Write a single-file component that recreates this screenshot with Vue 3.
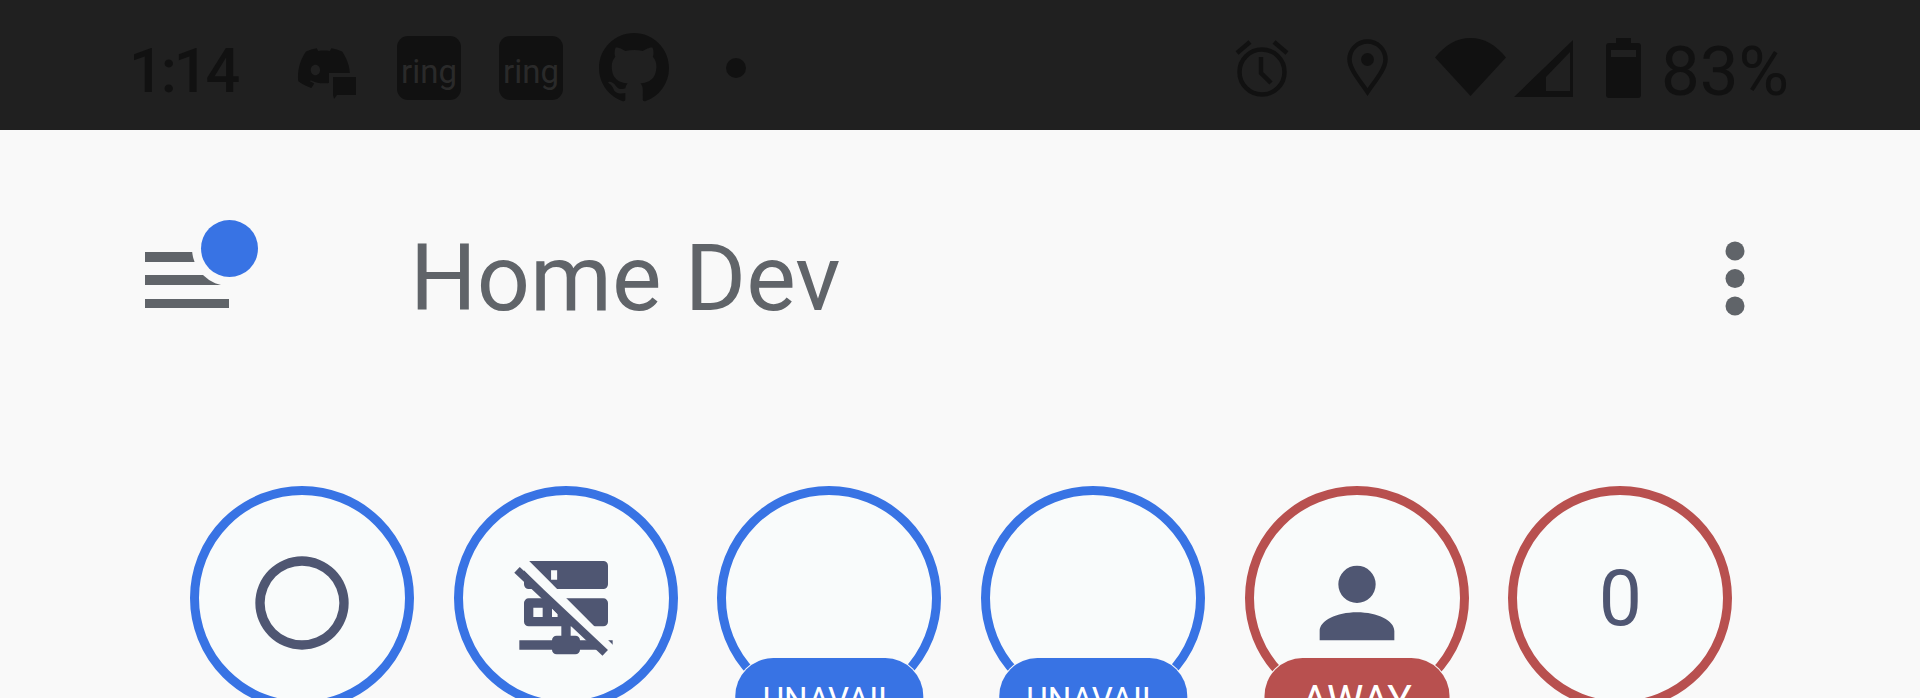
<script setup>
const entities = [
  { id: 'a', color: 'blue', icon: 'circle' },
  { id: 'b', color: 'blue', icon: 'server' },
  { id: 'c', color: 'blue', badge: 'UNAVAIL' },
  { id: 'd', color: 'blue', badge: 'UNAVAIL' },
  { id: 'e', color: 'red', icon: 'person', badge: 'AWAY', short: true },
  { id: 'f', color: 'red', value: '0' },
]
</script>

<template>
  <div class="page">
    <header class="status">
      <span class="time">1:14</span>
      <svg class="discord" viewBox="0 0 61 51" width="61" height="51">
        <path fill="#111" transform="translate(2 -6) scale(2.17)" d="M20.317 4.3698a19.7913 19.7913 0 00-4.8851-1.5152.0741.0741 0 00-.0785.0371c-.211.3753-.4447.8648-.6083 1.2495-1.8447-.2762-3.68-.2762-5.4868 0-.1636-.3933-.4058-.8742-.6177-1.2495a.077.077 0 00-.0785-.037 19.7363 19.7363 0 00-4.8852 1.515.0699.0699 0 00-.0321.0277C.5334 9.0458-.319 13.5799.0992 18.0578a.0824.0824 0 00.0312.0561c2.0528 1.5076 4.0413 2.4228 5.9929 3.0294a.0777.0777 0 00.0842-.0276c.4616-.6304.8731-1.2952 1.226-1.9942a.076.076 0 00-.0416-.1057c-.6528-.2476-1.2743-.5495-1.8722-.8923a.077.077 0 01-.0076-.1277c.1258-.0943.2517-.1923.3718-.2914a.0743.0743 0 01.0776-.0105c3.9278 1.7933 8.18 1.7933 12.0614 0a.0739.0739 0 01.0785.0095c.1202.099.246.1981.3728.2924a.077.077 0 01-.0066.1276 12.2986 12.2986 0 01-1.873.8914.0766.0766 0 00-.0407.1067c.3604.698.7719 1.3628 1.225 1.9932a.076.076 0 00.0842.0286c1.961-.6067 3.9495-1.5219 6.0023-3.0294a.077.077 0 00.0313-.0552c.5004-5.177-.8382-9.6739-3.5485-13.6604a.061.061 0 00-.0312-.0286zM8.02 15.3312c-1.1825 0-2.1569-1.0857-2.1569-2.419 0-1.3332.9555-2.4189 2.157-2.4189 1.2108 0 2.1757 1.0952 2.1568 2.419 0 1.3332-.9555 2.4189-2.1569 2.4189z" />
        <path fill="#202020" d="M33 25h28v26H33z" />
        <path fill="#111" d="M37 29h23v18H41l-3 4-1-4z" />
      </svg>
      <span class="ring first">ring</span>
      <span class="ring second">ring</span>
      <svg class="github" viewBox="0 0 16 16" width="70" height="70">
        <path fill="#111" d="M8 0C3.58 0 0 3.58 0 8c0 3.54 2.29 6.53 5.47 7.59.4.07.55-.17.55-.38 0-.19-.01-.82-.01-1.49-2.01.37-2.53-.49-2.69-.94-.09-.23-.48-.94-.82-1.13-.28-.15-.68-.52-.01-.53.63-.01 1.08.58 1.23.82.72 1.21 1.87.87 2.33.66.07-.52.28-.87.51-1.07-1.78-.2-3.64-.89-3.64-3.95 0-.87.31-1.59.82-2.15-.08-.2-.36-1.02.08-2.12 0 0 .67-.21 2.2.82.64-.18 1.32-.27 2-.27.68 0 1.36.09 2 .27 1.53-1.04 2.2-.82 2.2-.82.44 1.1.16 1.92.08 2.12.51.56.82 1.27.82 2.15 0 3.07-1.87 3.75-3.65 3.95.29.25.54.73.54 1.48 0 1.07-.01 1.93-.01 2.2 0 .21.15.46.55.38A8.013 8.013 0 0016 8c0-4.42-3.58-8-8-8z" />
      </svg>
      <span class="notif-dot"></span>
      <span class="spacer"></span>
      <svg class="alarm" viewBox="0 0 54 58" width="54" height="58">
        <g fill="none" stroke="#111" stroke-width="4.5">
          <circle cx="27" cy="33" r="22.5" />
          <path d="M15 3 2 14M39 3l13 11M26 18v16l10 10" />
        </g>
      </svg>
      <svg class="pin" viewBox="0 0 41 57" width="41" height="57">
        <path fill="none" stroke="#111" stroke-width="4.5" d="M20.5 53C13 42 2.5 30 2.5 20.5a18 18 0 0 1 36 0C38.500 30 28 42 20.500 53z" />
        <circle cx="20.500" cy="20.500" r="6.500" fill="#111" />
      </svg>
      <svg class="wifi" viewBox="0 0 71 58" width="71" height="58">
        <path fill="#111" d="M0 19.500C10 7 22 0 35.500 0S61 7 71 19.500L35.500 58z" />
      </svg>
      <svg class="signal" viewBox="0 0 59 57" width="59" height="57">
        <path fill="#111" fill-rule="evenodd" d="M59 0v57H0zM56 12V51H32V37z" />
      </svg>
      <svg class="battery" viewBox="0 0 35 60" width="35" height="60">
        <path fill="#111" fill-rule="evenodd" d="M10 0h15v5h7a3 3 0 0 1 3 3v49a3 3 0 0 1-3 3H3a3 3 0 0 1-3-3V8a3 3 0 0 1 3-3h7zM5 12v7h25v-7z" />
      </svg>
      <span class="percent">83%</span>
    </header>

    <div class="toolbar">
      <div class="menu">
        <span class="bar"></span>
        <span class="bar"></span>
        <span class="bar"></span>
        <span class="menu-dot"></span>
      </div>
      <h1 class="title">Home Dev</h1>
      <svg class="more" viewBox="0 0 20 75" width="20" height="75">
        <circle cx="10" cy="10" r="9.500" />
        <circle cx="10" cy="37.500" r="9.500" />
        <circle cx="10" cy="65" r="9.500" />
      </svg>
    </div>

    <section class="badges">
      <div v-for="e in entities" :key="e.id" class="entity" :class="e.color">
        <svg v-if="e.icon === 'circle'" class="icon" viewBox="0 0 24 24">
          <path d="M12 20a8 8 0 1 1 0-16 8 8 0 0 1 0 16zM12 2a10 10 0 1 0 0 20 10 10 0 0 0 0-20z" />
        </svg>
        <svg v-else-if="e.icon === 'server'" class="icon" viewBox="0 0 24 24">
          <path fill-rule="evenodd" d="M4 3h16a1 1 0 0 1 1 1v4a1 1 0 0 1-1 1H4a1 1 0 0 1-1-1V4a1 1 0 0 1 1-1zM8.800 5v2h1.300V5zM4 11h16a1 1 0 0 1 1 1v4a1 1 0 0 1-1 1H13v2h1a1 1 0 0 1 1 1h7v2h-7a1 1 0 0 1-1 1h-4a1 1 0 0 1-1-1H2v-2h7a1 1 0 0 1 1-1h1v-2H4a1 1 0 0 1-1-1v-4a1 1 0 0 1 1-1zM5 13v2h2v-2zM9 13.200V15h1.200v-.6z" />
          <path class="cut" d="M2 2.460l20 20" />
          <path class="slash" d="M1.500 4.900 20.400 22.700" />
        </svg>
        <svg v-else-if="e.icon === 'person'" class="icon" viewBox="0 0 24 24">
          <path d="M12 4a4 4 0 1 1 0 8 4 4 0 0 1 0-8zM12 14c4.420 0 8 1.790 8 4v2H4v-2c0-2.210 3.580-4 8-4z" />
        </svg>
        <span v-else-if="e.value" class="value">{{ e.value }}</span>
        <span v-if="e.badge" class="badge" :class="{ short: e.short }">{{ e.badge }}</span>
      </div>
    </section>
  </div>
</template>

<style>
html, body { margin: 0; overflow: hidden; }
</style>

<style scoped>
.page {
  width: 1920px;
  height: 698px;
  overflow: hidden;
  background: #f9f9f9;
  font-family: Roboto, "Liberation Sans", sans-serif;
  color: #606469;
}
.status {
  height: 130px;
  box-sizing: border-box;
  background: #202020;
  color: #111;
  display: flex;
  align-items: center;
  padding: 0 131px 0 129px;
}
.time {
  font-size: 61px;
  font-weight: 500;
  letter-spacing: -3px;
  line-height: 1;
  width: 167px;
  margin-top: 12px;
}
.discord { margin-top: 17px; margin-right: 40px; }
.ring {
  width: 64px;
  height: 64px;
  margin-top: 6px;
  border-radius: 11px;
  background: #111;
  color: #2a2a2a;
  font-size: 33px;
  font-weight: 400;
  line-height: 72px;
  text-align: center;
  box-sizing: border-box;
}
.first { margin-right: 38px; }
.second { margin-right: 36px; }
.github { margin-top: 5px; margin-right: 57px; }
.notif-dot { width: 20px; height: 20px; border-radius: 50%; background: #111; margin-top: 6px; }
.spacer { flex: 1; }
.alarm { margin-top: 6px; margin-right: 58px; }
.pin { margin-top: 5px; margin-right: 47px; }
.wifi { margin-top: 4px; margin-right: 8px; }
.signal { margin-top: 7px; margin-right: 33px; }
.battery { margin-top: 6px; margin-right: 19.500px; }
.percent { font-size: 69px; line-height: 1; margin-top: 12px; }

.toolbar {
  height: 298px;
  box-sizing: border-box;
  display: flex;
  align-items: center;
  padding: 0 175px 0 145px;
}
.menu {
  position: relative;
  width: 84px;
  height: 56px;
  margin-top: 2px;
  margin-right: 181px;
  display: flex;
  flex-direction: column;
  justify-content: space-between;
  flex: none;
}
.bar { display: block; height: 9.500px; background: #606469; }
.menu-dot {
  position: absolute;
  left: 56px;
  top: -32px;
  width: 57px;
  height: 57px;
  border-radius: 50%;
  background: #3873e4;
  box-shadow: 0 0 0 9px #f9f9f9;
}
.title {
  flex: 1;
  margin: 0;
  font-size: 93.500px;
  font-weight: 400;
  line-height: 1;
  color: #606469;
}
.more { fill: #606469; margin-top: -2px; }

.badges {
  display: flex;
  gap: 39.700px;
  padding: 58px 0 0 190px;
}
.entity {
  position: relative;
  width: 224px;
  height: 224px;
  box-sizing: border-box;
  flex: none;
  border: 9px solid;
  border-radius: 50%;
  background: #f9fbfb;
  display: flex;
  align-items: center;
  justify-content: center;
}
.entity.blue { border-color: #3873e4; }
.entity.red { border-color: #b8504f; }
.icon { width: 112px; height: 112px; margin-top: 10px; fill: #4f5672; }
.cut { fill: none; stroke: #f9fbfb; stroke-width: 2.200; }
.slash { fill: none; stroke: #4f5672; stroke-width: 1.700; }
.value { font-size: 77px; line-height: 1; color: #4f5672; margin-top: 2px; }
.badge {
  position: absolute;
  left: 50%;
  top: 163px;
  transform: translateX(-50%);
  padding: 22px 27px;
  border-radius: 38px;
  font-size: 33px;
  line-height: 40px;
  white-space: nowrap;
  color: #fff;
  box-shadow: 0 0 0 1px #f9f9f9;
}
.badge.short {
  min-width: 185px;
  box-sizing: border-box;
  text-align: center;
  padding: 18px 27px;
  font-size: 41px;
  line-height: 48px;
}
.blue .badge { background: #3873e4; }
.red .badge { background: #b8504f; }
</style>
